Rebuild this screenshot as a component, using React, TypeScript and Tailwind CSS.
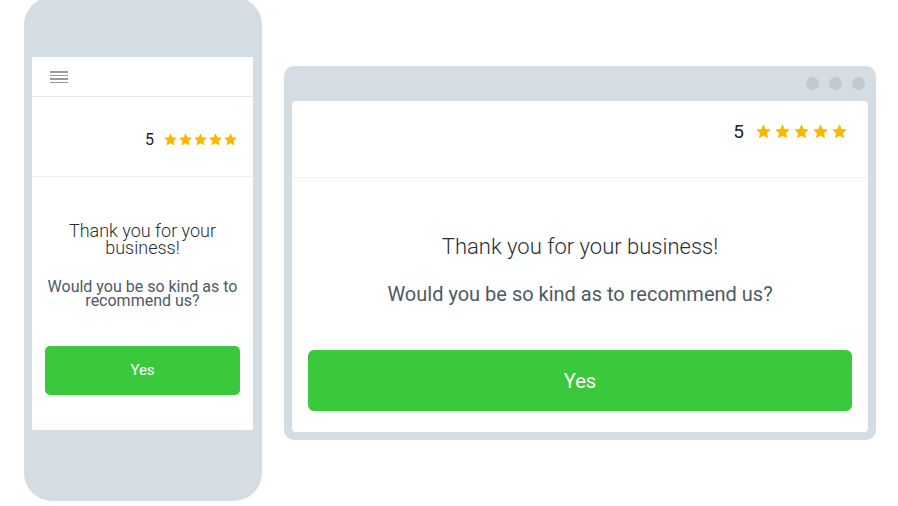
import React from "react";

const Star = ({ size }: { size: number }) => (
  <svg width={size} height={size} viewBox="0 0 24 24">
    <path
      d="M12 1.8l3.1 6.6 7.2.9-5.3 5 1.4 7.1L12 17.9l-6.4 3.5 1.4-7.1-5.3-5 7.2-.9z"
      fill="#f9b902"
    />
  </svg>
);

export default function App() {
  return (
    <div
      className="w-[898px] h-[506px] bg-white overflow-hidden flex items-start pl-[24px]"
      style={{ fontFamily: "Roboto, 'Noto Sans', sans-serif" }}
    >
      {/* Phone */}
      <div className="mt-[-3px] w-[238px] h-[504px] shrink-0 rounded-[28px] bg-[#d3dde3] pt-[60px] pl-[8px] pr-[9px]">
        <div className="bg-white h-[373px] flex flex-col">
          <div className="h-[40px] border-b border-[#e3e8ec] flex items-center pl-[18px]">
            <div className="flex flex-col gap-[2px] w-[18px] pt-[1px]">
              <div className="h-[1.5px] bg-[#9a9a9a]" />
              <div className="h-[1.5px] bg-[#9a9a9a]" />
              <div className="h-[1.5px] bg-[#9a9a9a]" />
              <div className="h-[1.5px] bg-[#9a9a9a]" />
            </div>
          </div>
          <div className="h-[80px] border-b border-[#eef1f3] flex items-center justify-end pr-[15px] pt-[6px]">
            <span className="text-[16px] text-[#222] mr-[9px] leading-none">5</span>
            <div className="flex gap-0">
              <Star size={15} />
              <Star size={15} />
              <Star size={15} />
              <Star size={15} />
              <Star size={15} />
            </div>
          </div>
          <div className="flex flex-col items-center pt-[45px] px-[13px]">
            <div className="text-[18px] leading-[17px] font-light text-[#2a2f33] text-center">
              Thank you for your
              <br />
              business!
            </div>
            <div className="mt-[24px] text-[16px] leading-[14px] text-[#4e5a64] text-center">
              Would you be so kind as to
              <br />
              recommend us?
            </div>
            <div className="mt-[38px] w-full h-[49px] rounded-[5px] bg-[#3ac93c] flex items-center justify-center text-white text-[15px]">
              Yes
            </div>
          </div>
        </div>
      </div>

      {/* Browser */}
      <div className="ml-[22px] mt-[66px] w-[592px] h-[374px] shrink-0 rounded-[10px] bg-[#d3dde3] flex flex-col px-[8px] pb-[8px]">
        <div className="h-[35px] flex items-center justify-end gap-[10px] pr-[3px]">
          <div className="w-[13px] h-[13px] rounded-full bg-[#c3c8cd]" />
          <div className="w-[13px] h-[13px] rounded-full bg-[#c3c8cd]" />
          <div className="w-[13px] h-[13px] rounded-full bg-[#c3c8cd]" />
        </div>
        <div className="flex-1 bg-white rounded-[4px] flex flex-col">
          <div className="h-[77px] border-b border-[#eef1f3] flex items-center justify-end pr-[20px] pb-[16px]">
            <span className="text-[19px] text-[#222] mr-[11px] leading-none">5</span>
            <div className="flex gap-[2px]">
              <Star size={17} />
              <Star size={17} />
              <Star size={17} />
              <Star size={17} />
              <Star size={17} />
            </div>
          </div>
          <div className="flex flex-col items-center pt-[56px] px-[16px]">
            <div className="text-[22px] leading-[26px] font-light text-[#2a2f33] text-center">
              Thank you for your business!
            </div>
            <div className="mt-[22px] text-[20px] leading-[24px] text-[#4e5a64] text-center">
              Would you be so kind as to recommend us?
            </div>
            <div className="mt-[44px] w-full h-[61px] rounded-[6px] bg-[#3ac93c] flex items-center justify-center text-white text-[20px]">
              Yes
            </div>
          </div>
        </div>
      </div>
    </div>
  );
}
